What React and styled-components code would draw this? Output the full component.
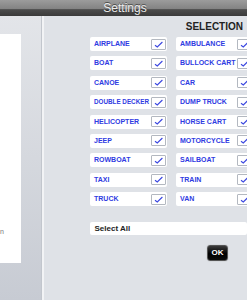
import React, { useState } from 'react';
import styled, { createGlobalStyle } from 'styled-components';

const GlobalStyle = createGlobalStyle`
  html, body {
    margin: 0;
    padding: 0;
    overflow: hidden;
  }
  body {
    font-family: "Liberation Sans", Arial, sans-serif;
  }
`;

const Screen = styled.div`
  width: 247px;
  height: 300px;
  display: flex;
  flex-direction: column;
  overflow: hidden;
`;

const TitleBar = styled.div`
  height: 16px;
  flex: none;
  display: flex;
  align-items: center;
  justify-content: center;
  background: linear-gradient(#9c9c9c 0%, #838383 55%, #4c4c4c 60%, #3a3a3a 100%);
  color: #ececec;
  font-size: 12px;
  line-height: 16px;
  text-shadow: 0 -1px 0 rgba(0, 0, 0, 0.5);
  padding-left: 3px;
`;

const Body = styled.div`
  flex: 1;
  display: flex;
  min-height: 0;
`;

const Sidebar = styled.div`
  width: 42px;
  flex: none;
  display: flex;
  flex-direction: column;
  padding: 18px 0 37px;
  box-sizing: border-box;
  background: linear-gradient(#e3e5e9, #c7cbd3);
  border-right: 1px solid #c2c6cd;
  box-shadow: 1px 0 0 #f2f3f5, 2px 0 0 #f2f3f5;
`;

const SidePanel = styled.div`
  width: 21px;
  flex: 1;
  background: #fff;
  display: flex;
  flex-direction: column;
  justify-content: flex-end;
  padding-bottom: 27px;
  box-sizing: border-box;
  overflow: hidden;
`;

const SideText = styled.span`
  font-size: 7px;
  color: #777;
  line-height: 8px;
`;

const Main = styled.div`
  flex: 1;
  min-width: 0;
  margin-left: 2px;
  background: #dfe2e7;
  padding: 5px 0 0 46px;
  overflow: hidden;
`;

const Heading = styled.div`
  font-size: 10px;
  font-weight: bold;
  color: #222;
  line-height: 12px;
  text-align: right;
  padding-right: 4px;
`;

const Grid = styled.div`
  display: grid;
  grid-template-columns: 77px 77px;
  column-gap: 9px;
  row-gap: 5.4px;
  margin-top: 4px;
  width: 163px;
`;

const Row = styled.label`
  height: 14px;
  background: #fff;
  border-radius: 2px;
  display: flex;
  align-items: center;
  padding-left: 4px;
  box-sizing: border-box;
  cursor: pointer;
`;

const Label = styled.span`
  flex: 1;
  min-width: 0;
  white-space: nowrap;
  font-size: ${(p) => (p.small ? '6.3px' : '7px')};
  font-weight: bold;
  color: #2f3be2;
  line-height: 14px;
`;

const Box = styled.span`
  width: 15px;
  height: 11px;
  flex: none;
  margin-right: 1px;
  box-sizing: border-box;
  border: 1px solid #b3b8c0;
  border-radius: 1px;
  background: #fff;
  display: flex;
  align-items: center;
  justify-content: center;
`;

const SelectAll = styled.div`
  margin-top: 16px;
  height: 13px;
  background: #fff;
  border-radius: 2px;
  font-size: 8px;
  font-weight: bold;
  color: #222;
  line-height: 13px;
  padding-left: 4.5px;
`;

const Actions = styled.div`
  display: flex;
  justify-content: flex-end;
  padding-right: 19px;
  margin-top: 10px;
`;

const OkButton = styled.button`
  width: 21px;
  height: 16px;
  padding: 0;
  border: 1px solid #555;
  border-radius: 3px;
  background: linear-gradient(#3a3a3a, #000 55%, #0c0c0c);
  color: #fff;
  font-family: "Liberation Sans", Arial, sans-serif;
  font-size: 8px;
  font-weight: bold;
  line-height: 14px;
  box-shadow: 0 0 1px rgba(0, 0, 0, 0.4);
`;

const vehicles = [
  'AIRPLANE', 'AMBULANCE',
  'BOAT', 'BULLOCK CART',
  'CANOE', 'CAR',
  'DOUBLE DECKER', 'DUMP TRUCK',
  'HELICOPTER', 'HORSE CART',
  'JEEP', 'MOTORCYCLE',
  'ROWBOAT', 'SAILBOAT',
  'TAXI', 'TRAIN',
  'TRUCK', 'VAN',
];

const Tick = () => (
  <svg width="9" height="7" viewBox="0 0 9 7">
    <path d="M1 4.2 L3.3 6 L8.4 1" fill="none" stroke="#3a46e0" strokeWidth="1.1" />
  </svg>
);

const App = () => {
  const [checked, setChecked] = useState(() => vehicles.map(() => true));

  const toggle = (i) => setChecked(checked.map((c, j) => (j === i ? !c : c)));

  return (
    <Screen>
      <GlobalStyle />
      <TitleBar>Settings</TitleBar>
      <Body>
        <Sidebar>
          <SidePanel>
            <SideText>n</SideText>
          </SidePanel>
        </Sidebar>
        <Main>
          <Heading>SELECTION</Heading>
          <Grid>
            {vehicles.map((v, i) => (
              <Row key={v} onClick={() => toggle(i)}>
                <Label small={v.length > 12}>{v}</Label>
                <Box>{checked[i] && <Tick />}</Box>
              </Row>
            ))}
          </Grid>
          <SelectAll onClick={() => setChecked(vehicles.map(() => true))}>Select All</SelectAll>
          <Actions>
            <OkButton>OK</OkButton>
          </Actions>
        </Main>
      </Body>
    </Screen>
  );
};

export default App;
